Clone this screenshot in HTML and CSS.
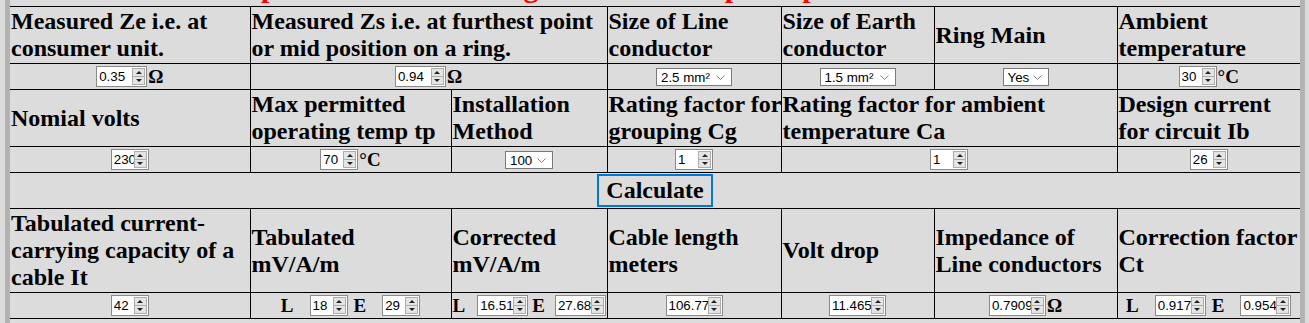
FILE: index.html
```html
<!DOCTYPE html>
<html lang="en">
<head>
    <meta charset="UTF-8">
    <meta name="viewport" content="width=device-width, initial-scale=1.0">
    <title>Cable sizing calculator</title>
    <link rel="stylesheet" href="styles.css">
</head>
<body>
<div class="page">
    <h1 class="title">Simple mains cable sizing and a volt drop computer</h1>

    <table class="calc">
        <colgroup>
            <col class="c1"><col class="c2"><col class="c3"><col class="c4"><col class="c5"><col class="c6"><col class="c7">
        </colgroup>

        <tr class="heads">
            <td>Measured Ze i.e. at consumer unit.</td>
            <td colspan="2">Measured Zs i.e. at furthest point or mid position on a ring.</td>
            <td>Size of Line conductor</td>
            <td>Size of Earth conductor</td>
            <td>Ring Main</td>
            <td>Ambient temperature</td>
        </tr>
        <tr class="fields">
            <td><span class="num w-m"><input type="number" value="0.35" step="0.01"><span class="spin"><i class="up"></i><i class="down"></i></span></span><span class="unit">Ω</span></td>
            <td colspan="2"><span class="num w-m"><input type="number" value="0.94" step="0.01"><span class="spin"><i class="up"></i><i class="down"></i></span></span><span class="unit">Ω</span></td>
            <td>
                <select class="sel-size">
                    <option>1.0 mm²</option>
                    <option>1.5 mm²</option>
                    <option selected>2.5 mm²</option>
                    <option>4 mm²</option>
                    <option>6 mm²</option>
                </select>
            </td>
            <td>
                <select class="sel-size">
                    <option>1.0 mm²</option>
                    <option selected>1.5 mm²</option>
                    <option>2.5 mm²</option>
                </select>
            </td>
            <td>
                <select class="sel-yes">
                    <option selected>Yes</option>
                    <option>No</option>
                </select>
            </td>
            <td><span class="num w-s"><input type="number" value="30"><span class="spin"><i class="up"></i><i class="down"></i></span></span><span class="unit">°C</span></td>
        </tr>

        <tr class="heads">
            <td>Nomial volts</td>
            <td>Max permitted operating temp tp</td>
            <td>Installation Method</td>
            <td><span class="nw">Rating factor for</span> grouping Cg</td>
            <td colspan="2">Rating factor for ambient temperature Ca</td>
            <td>Design current for circuit Ib</td>
        </tr>
        <tr class="fields">
            <td><span class="num w-s"><input type="number" value="230"><span class="spin"><i class="up"></i><i class="down"></i></span></span></td>
            <td><span class="num w-s"><input type="number" value="70"><span class="spin"><i class="up"></i><i class="down"></i></span></span><span class="unit">°C</span></td>
            <td>
                <select class="sel-method">
                    <option selected>100</option>
                    <option>101</option>
                    <option>102</option>
                    <option>103</option>
                </select>
            </td>
            <td><span class="num w-s"><input type="number" value="1"><span class="spin"><i class="up"></i><i class="down"></i></span></span></td>
            <td colspan="2"><span class="num w-s"><input type="number" value="1"><span class="spin"><i class="up"></i><i class="down"></i></span></span></td>
            <td><span class="num w-s"><input type="number" value="26"><span class="spin"><i class="up"></i><i class="down"></i></span></span></td>
        </tr>

        <tr class="action">
            <td colspan="7"><button class="btn" type="button">Calculate</button></td>
        </tr>

        <tr class="heads">
            <td>Tabulated current-carrying capacity of a cable It</td>
            <td>Tabulated<br>mV/A/m</td>
            <td>Corrected<br>mV/A/m</td>
            <td>Cable length meters</td>
            <td>Volt drop</td>
            <td>Impedance of Line conductors</td>
            <td>Correction factor Ct</td>
        </tr>
        <tr class="fields">
            <td><span class="num w-s"><input type="number" value="42"><span class="spin"><i class="up"></i><i class="down"></i></span></span></td>
            <td><span class="lbl">L</span><span class="num w-s"><input type="number" value="18"><span class="spin"><i class="up"></i><i class="down"></i></span></span><span class="lbl lbl-e">E</span><span class="num w-s"><input type="number" value="29"><span class="spin"><i class="up"></i><i class="down"></i></span></span></td>
            <td class="tight"><span class="lbl">L</span><span class="num w-m"><input type="number" value="16.51"><span class="spin"><i class="up"></i><i class="down"></i></span></span><span class="lbl lbl-e">E</span><span class="num w-m"><input type="number" value="27.68"><span class="spin"><i class="up"></i><i class="down"></i></span></span></td>
            <td><span class="num w-l"><input type="number" value="106.77"><span class="spin"><i class="up"></i><i class="down"></i></span></span></td>
            <td><span class="num w-l"><input type="number" value="11.465"><span class="spin"><i class="up"></i><i class="down"></i></span></span></td>
            <td><span class="num w-l"><input type="number" value="0.7909"><span class="spin"><i class="up"></i><i class="down"></i></span></span><span class="unit">Ω</span></td>
            <td><span class="lbl">L</span><span class="num w-m"><input type="number" value="0.917"><span class="spin"><i class="up"></i><i class="down"></i></span></span><span class="lbl lbl-e">E</span><span class="num w-m"><input type="number" value="0.954"><span class="spin"><i class="up"></i><i class="down"></i></span></span></td>
        </tr>
    </table>
</div>
</body>
</html>
```

FILE: styles.css
```css
body {
    margin: 0 4px 0 5px;
    background: #dcdcdc;
    font-family: "Liberation Serif", "Times New Roman", serif;
}

.page {
    display: flow-root;
    border-left: 5px solid #b3b3b3;
    border-right: 5px solid #b3b3b3;
    padding-bottom: 10px;
}

/* the heading sits scrolled off the top, only its feet show */
.title {
    margin: -30px 0 2px;
    padding-left: 201px;
    font-size: 30px;
    line-height: 34px;
    color: red;
    white-space: nowrap;
}

.calc {
    width: 100%;
    border-collapse: collapse;
    table-layout: fixed;
}

.c1 { width: 240px; }
.c2 { width: 201px; }
.c3 { width: 156px; }
.c4 { width: 174px; }
.c5 { width: 153px; }
.c6 { width: 183px; }
.c7 { width: 183px; }

.calc td {
    border: 1px solid #000;
    padding: 1px;
}

.calc td:first-child {
    border-left: 0;
}

.calc td:last-child {
    border-right: 0;
}

.heads td {
    font-size: 24px;
    font-weight: bold;
    line-height: 27px;
    vertical-align: middle;
}

.nw {
    white-space: nowrap;
}

.fields td {
    height: 23px;
    text-align: center;
    white-space: nowrap;
}

/* number box with an always visible spinner */
.num {
    display: inline-flex;
    box-sizing: border-box;
    height: 21px;
    border: 1px solid #8a8a8a;
    background: #fff;
    vertical-align: middle;
}

.num input {
    flex: 1;
    min-width: 0;
    border: 0;
    padding: 0 0 0 2px;
    background: transparent;
    color: #000;
    font: 13.33px "Liberation Sans", Arial, sans-serif;
    outline: none;
    -moz-appearance: textfield;
}

.num input::-webkit-inner-spin-button,
.num input::-webkit-outer-spin-button {
    -webkit-appearance: none;
    margin: 0;
}

.spin {
    display: flex;
    flex-direction: column;
    flex: none;
    box-sizing: border-box;
    width: 13px;
    margin: 1px 1px 1px 0;
    border: 1px solid #adadad;
    background: #e5e5e5;
}

.spin i {
    flex: 1;
    display: flex;
    align-items: center;
    justify-content: center;
}

.spin .up {
    border-bottom: 1px solid #adadad;
}

.spin i::before {
    content: "";
    border-left: 3px solid transparent;
    border-right: 3px solid transparent;
}

.spin .up::before {
    border-bottom: 3px solid #222;
}

.spin .down::before {
    border-top: 3px solid #222;
}

.w-s { width: 38px; }
.w-m { width: 51px; }
.w-l { width: 57px; }

select {
    appearance: none;
    box-sizing: border-box;
    height: 18px;
    border: 1px solid #7a7a7a;
    border-radius: 0;
    padding: 0 0 0 4px;
    background: #fff url("data:image/svg+xml,%3Csvg xmlns='http://www.w3.org/2000/svg' width='9' height='5'%3E%3Cpath d='M.5.5l4 4 4-4' fill='none' stroke='%23808080'/%3E%3C/svg%3E") no-repeat right 6px center;
    color: #000;
    font: 13.33px "Liberation Sans", Arial, sans-serif;
    vertical-align: middle;
}

.sel-size { width: 76px; }
.sel-yes { width: 46px; }
.sel-method { width: 48px; }

.unit {
    margin-left: 1px;
    font-size: 19px;
    font-weight: bold;
    vertical-align: middle;
}

.lbl {
    margin-right: 16px;
    font-size: 19px;
    font-weight: bold;
    vertical-align: middle;
}

.lbl-e {
    margin-left: 6px;
}

.tight .lbl {
    margin-right: 12px;
}

.tight .lbl-e {
    margin-left: 4px;
    margin-right: 10px;
}

.action td {
    height: 35px;
    padding: 0;
    text-align: center;
}

.btn {
    box-sizing: border-box;
    width: 116px;
    height: 33px;
    padding: 0;
    border: 2px solid #0078d7;
    background: transparent;
    color: #000;
    font: bold 24px "Liberation Serif", "Times New Roman", serif;
    vertical-align: middle;
}
```
